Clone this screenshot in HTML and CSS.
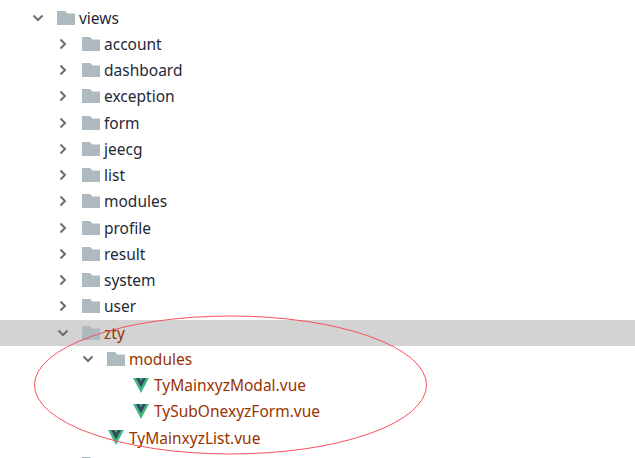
FILE: index.html
```html
<!DOCTYPE html>
<html lang="en">
<head>
<meta charset="utf-8">
<title>Project tree</title>
<link rel="stylesheet" href="styles.css">
</head>
<body>
<svg width="0" height="0" class="defs">
  <symbol id="folder" viewBox="0 0 18 14"><path d="M0 0H8L10.5 2.5H18V14H0Z" fill="#afb9c0"/></symbol>
  <symbol id="right" viewBox="0 0 12 12"><path d="M3.5 1.5L8 6L3.5 10.5" fill="none" stroke="#6e6e6e" stroke-width="2"/></symbol>
  <symbol id="down" viewBox="0 0 12 12"><path d="M1.5 3.5L6 8L10.5 3.5" fill="none" stroke="#6e6e6e" stroke-width="2"/></symbol>
  <symbol id="vue" viewBox="0 0 16 15"><path d="M0 0H16L8 15Z" fill="#41b883"/><path d="M3 0H6.2L8 3L9.8 0H13L8 9.4Z" fill="#35495e"/></symbol>
</svg>
<main class="tree">
  <div class="row l0"><svg class="arrow"><use href="#down"/></svg><svg class="folder"><use href="#folder"/></svg><span>views</span></div>
  <div class="row l1"><svg class="arrow"><use href="#right"/></svg><svg class="folder"><use href="#folder"/></svg><span>account</span></div>
  <div class="row l1"><svg class="arrow"><use href="#right"/></svg><svg class="folder"><use href="#folder"/></svg><span>dashboard</span></div>
  <div class="row l1"><svg class="arrow"><use href="#right"/></svg><svg class="folder"><use href="#folder"/></svg><span>exception</span></div>
  <div class="row l1"><svg class="arrow"><use href="#right"/></svg><svg class="folder"><use href="#folder"/></svg><span>form</span></div>
  <div class="row l1"><svg class="arrow"><use href="#right"/></svg><svg class="folder"><use href="#folder"/></svg><span>jeecg</span></div>
  <div class="row l1"><svg class="arrow"><use href="#right"/></svg><svg class="folder"><use href="#folder"/></svg><span>list</span></div>
  <div class="row l1"><svg class="arrow"><use href="#right"/></svg><svg class="folder"><use href="#folder"/></svg><span>modules</span></div>
  <div class="row l1"><svg class="arrow"><use href="#right"/></svg><svg class="folder"><use href="#folder"/></svg><span>profile</span></div>
  <div class="row l1"><svg class="arrow"><use href="#right"/></svg><svg class="folder"><use href="#folder"/></svg><span>result</span></div>
  <div class="row l1"><svg class="arrow"><use href="#right"/></svg><svg class="folder"><use href="#folder"/></svg><span>system</span></div>
  <div class="row l1"><svg class="arrow"><use href="#right"/></svg><svg class="folder"><use href="#folder"/></svg><span>user</span></div>
  <div class="row l1 selected new"><svg class="arrow"><use href="#down"/></svg><svg class="folder"><use href="#folder"/></svg><span>zty</span></div>
  <div class="row l2 new"><svg class="arrow"><use href="#down"/></svg><svg class="folder"><use href="#folder"/></svg><span>modules</span></div>
  <div class="row l3 new"><svg class="vue"><use href="#vue"/></svg><span>TyMainxyzModal.vue</span></div>
  <div class="row l3 new"><svg class="vue"><use href="#vue"/></svg><span>TySubOnexyzForm.vue</span></div>
  <div class="row l2b new"><svg class="vue"><use href="#vue"/></svg><span>TyMainxyzList.vue</span></div>
  <div class="row l1"><svg class="arrow"><use href="#right"/></svg><svg class="folder"><use href="#folder"/></svg><span></span></div>
</main>
<svg class="annotation" width="635" height="458" viewBox="0 0 635 458">
  <ellipse cx="230.5" cy="385" rx="196" ry="69" fill="none" stroke="#f4525c" stroke-width="1"/>
</svg>
</body>
</html>
```
FILE: styles.css
```css
html, body {
  margin: 0;
  height: 458px;
  overflow: hidden;
  background: #fff;
}
body {
  position: relative;
  font-family: "Noto Sans", "Open Sans", sans-serif;
  font-size: 15.5px;
  color: #1f2a36;
}
.defs { position: absolute; }
.tree { padding-top: 4.6px; }
.row {
  display: flex;
  align-items: center;
  height: 26.25px;
  white-space: nowrap;
}
.l0 { padding-left: 32px; }
.l1 { padding-left: 57px; }
.l2 { padding-left: 82px; }
.l2b { padding-left: 108px; }
.l3 { padding-left: 133px; }
.arrow { width: 12px; height: 12px; margin-right: 13px; flex: none; }
.folder { width: 18px; height: 14px; margin-right: 4px; flex: none; }
.vue { width: 16px; height: 15px; margin-right: 5px; flex: none; }
.selected { background: #d3d3d3; }
.new { color: #993300; }
.annotation { position: absolute; left: 0; top: 0; pointer-events: none; }
```
